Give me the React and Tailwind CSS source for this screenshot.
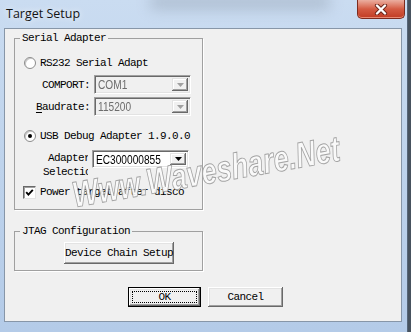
const mono = "font-['Liberation_Mono','DejaVu_Sans_Mono',monospace] text-[11px] tracking-[-0.6px] leading-[14px] text-black";

function Triangle({ color }) {
  return (
    <svg width="7" height="4" viewBox="0 0 7 4">
      <polygon points="0,0 7,0 3.5,4" fill={color} />
    </svg>
  );
}

function Combo({ value, disabled, className }) {
  return (
    <div
      className={`flex p-[2px] border border-t-[#a0a0a0] border-l-[#a0a0a0] border-b-white border-r-white shadow-[inset_1px_1px_#696969,inset_-1px_-1px_#e3e3e3] ${disabled ? "bg-[#f0f0f0]" : "bg-white"} ${className}`}
    >
      <div className="flex-1 flex items-center overflow-hidden pl-[1px]">
        <span
          className={`inline-block origin-left scale-x-[0.78] whitespace-nowrap font-['Liberation_Sans',Arial,sans-serif] text-[13px] leading-[15px] ${disabled ? "text-[#6d6d6d]" : "text-black"}`}
        >
          {value}
        </span>
      </div>
      <div className="w-[16px] flex items-center justify-center bg-[#f0f0f0] shadow-[inset_-1px_-1px_#696969,inset_1px_1px_#e3e3e3,inset_-2px_-2px_#a0a0a0,inset_2px_2px_#fff]">
        <Triangle color={disabled ? "#a0a0a0" : "#000"} />
      </div>
    </div>
  );
}

function Radio({ checked }) {
  return (
    <div className="w-[12px] h-[12px] rounded-full border border-[#8c8c8c] bg-white shadow-[inset_1px_1px_#c8c8c8] flex items-center justify-center">
      {checked && <div className="w-[4px] h-[4px] rounded-full bg-black" />}
    </div>
  );
}

function Checkbox() {
  return (
    <div className="w-[13px] h-[13px] bg-white border border-t-[#696969] border-l-[#696969] border-b-[#e3e3e3] border-r-[#e3e3e3] shadow-[inset_1px_1px_#a0a0a0] flex items-center justify-center">
      <svg width="9" height="9" viewBox="0 0 9 9">
        <path d="M1.2 4.2 L3.4 6.6 L7.8 1.8" fill="none" stroke="#000" strokeWidth="1.9" />
      </svg>
    </div>
  );
}

const raised =
  "bg-[#f0f0f0] shadow-[inset_-1px_-1px_#696969,inset_1px_1px_#fff,inset_-2px_-2px_#a0a0a0,inset_2px_2px_#e3e3e3]";

export default function App() {
  return (
    <div className="w-[411px] h-[332px] overflow-hidden bg-[#47525e] flex">
      <div className="relative w-[408px] h-[332px] flex flex-col pl-[4px] pr-[5px] border-r border-[#56667a] bg-gradient-to-b from-[#cadcf1] via-[#bed3ec] to-[#b4cbe8] overflow-hidden">
        <div className="absolute left-[150px] top-[-6px] w-[180px] h-[16px] bg-[#8b98a8] opacity-40 blur-[7px]" />

        {/* title bar */}
        <div className="relative h-[28px] flex items-start">
          <div className="mt-[6px] pl-[2px] font-['Open_Sans',sans-serif] text-[12.5px] leading-[16px] text-[#141414] [text-shadow:0_0_6px_#fff]">
            Target Setup
          </div>
          <div className="ml-auto mr-[-3px] w-[48px] h-[19px] rounded-b-[5px] border border-t-0 border-[#7d2b1e] bg-gradient-to-b from-[#eaaea0] via-[#d45b43] to-[#c13b22] shadow-[inset_0_-1px_#e98a73] flex items-center justify-center">
            <svg width="14" height="11" viewBox="0 0 14 11">
              <path d="M3 1.5 L11 9.5 M11 1.5 L3 9.5" stroke="#6b2418" strokeWidth="4.2" strokeLinecap="round" />
              <path d="M3 1.5 L11 9.5 M11 1.5 L3 9.5" stroke="#fff" strokeWidth="2.4" strokeLinecap="round" />
            </svg>
          </div>
        </div>

        {/* client */}
        <div className="relative h-[294px] border border-[#8796a8] bg-[#f0f0f0] flex flex-col">
          <fieldset className="ml-[9px] mt-[2px] w-[189px] border border-[#a0a0a0] shadow-[1px_1px_#fff] flex flex-col pb-[10px]">
            <legend className={`${mono} ml-[5px] px-[2px]`}>Serial Adapter</legend>

            <div className="mt-[10px] h-[16px] pl-[9px] flex items-center gap-[4px]">
              <Radio />
              <span className={mono}>RS232 Serial Adapt</span>
            </div>

            <div className="mt-[4px] flex items-center gap-[4px]">
              <div className={`${mono} w-[75px] text-right`}>COMPORT:</div>
              <Combo value="COM1" disabled className="w-[97px] h-[19px]" />
            </div>

            <div className="mt-[3px] flex items-center gap-[4px]">
              <div className={`${mono} w-[75px] text-right`}>
                <span className="underline underline-offset-2">B</span>audrate:
              </div>
              <Combo value="115200" disabled className="w-[97px] h-[19px]" />
            </div>

            <div className="mt-[12px] h-[16px] pl-[9px] flex items-center gap-[4px]">
              <Radio checked />
              <span className={`${mono} whitespace-nowrap`}>USB Debug Adapter 1.9.0.0</span>
            </div>

            <div className="mt-[6px] flex items-start">
              <div className={`${mono} ml-[25px] mt-[1px] w-[48px] overflow-hidden whitespace-nowrap`}>
                <div className="pl-[8px]">Adapter</div>
                <div className="pl-[3px]">Selection</div>
              </div>
              <Combo value="EC300000855" className="ml-[4px] w-[97px] h-[18px]" />
            </div>

            <div className="mt-[6px] h-[14px] pl-[8px] flex items-center gap-[4px]">
              <Checkbox />
              <span className={`${mono} whitespace-nowrap`}>Power target after disco</span>
            </div>
          </fieldset>

          <fieldset className="ml-[9px] mt-[14px] w-[189px] border border-[#a0a0a0] shadow-[1px_1px_#fff] flex flex-col pb-[6px]">
            <legend className={`${mono} ml-[5px] px-[2px]`}>JTAG Configuration</legend>
            <button className={`${raised} ${mono} ml-[49px] mt-[4px] w-[110px] h-[22px] flex items-center justify-center whitespace-nowrap`}>
              Device Chain Setup
            </button>
          </fieldset>

          <div className="mt-[16px] pl-[123px] flex gap-[7px]">
            <button className="w-[73px] h-[20px] border border-black flex">
              <div className={`${raised} flex-1 flex p-[3px]`}>
                <div className={`${mono} flex-1 border border-dotted border-black flex items-center justify-center`}>OK</div>
              </div>
            </button>
            <button className={`${raised} ${mono} w-[75px] h-[20px] flex items-center justify-center`}>Cancel</button>
          </div>

          <div className="pointer-events-none absolute left-[201px] top-[143px] -translate-x-1/2 -translate-y-1/2 -rotate-[10deg] scale-x-[0.76] whitespace-nowrap font-['Liberation_Sans',Arial,sans-serif] font-bold italic text-[36px] leading-none text-[#fafafa] [-webkit-text-stroke:1px_#9c9c9c] opacity-90">
            Www.Waveshare.Net
          </div>
        </div>
      </div>
    </div>
  );
}
